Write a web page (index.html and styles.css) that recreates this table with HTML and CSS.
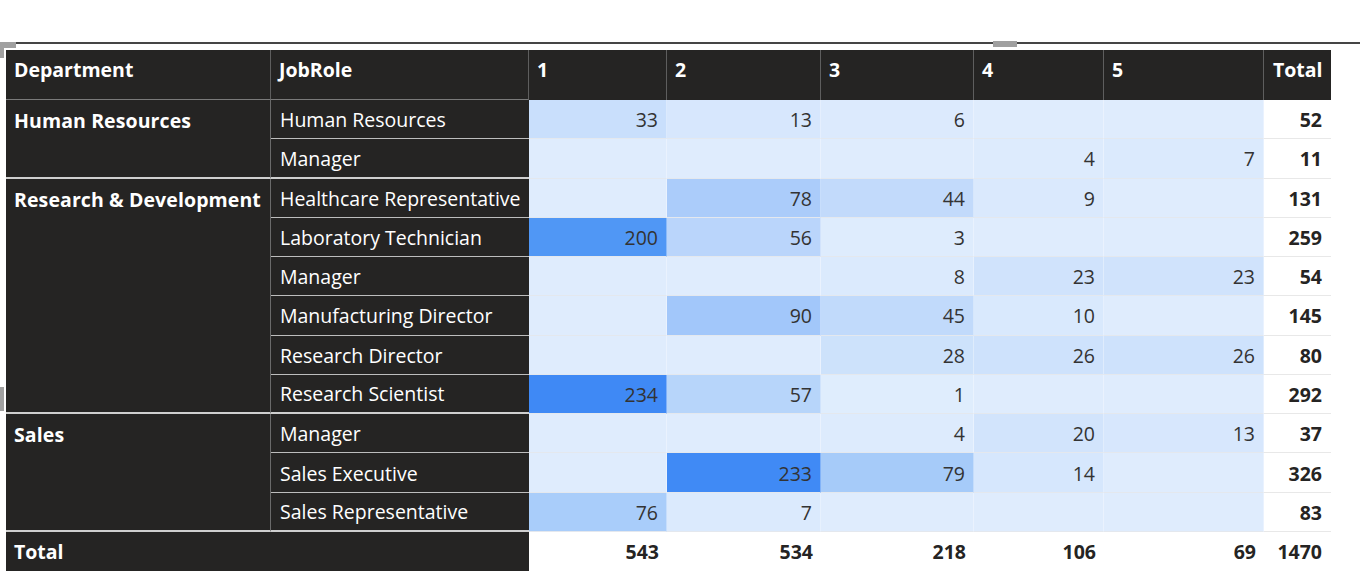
FILE: index.html
```html
<!DOCTYPE html>
<html lang="en">
<head>
<meta charset="utf-8">
<title>Matrix</title>
<link rel="stylesheet" href="styles.css">
</head>
<body>
<div class="frame">
  <div class="rule"></div>
  <div class="matrix">
    <div class="hd">Department</div>
    <div class="hd">JobRole</div>
    <div class="hd hv">1</div>
    <div class="hd hv">2</div>
    <div class="hd hv">3</div>
    <div class="hd hv">4</div>
    <div class="hd hv">5</div>
    <div class="hd hv last">Total</div>

    <div class="dept span2">Human Resources</div>
    <div class="role">Human Resources</div>
    <div class="v" style="background:#c9dffc">33</div>
    <div class="v" style="background:#d7e7fd">13</div>
    <div class="v" style="background:#dceafd">6</div>
    <div class="v" style="background:#dfecfd"></div>
    <div class="v" style="background:#dfecfd"></div>
    <div class="t">52</div>

    <div class="role glast">Manager</div>
    <div class="v" style="background:#dfecfd"></div>
    <div class="v" style="background:#dfecfd"></div>
    <div class="v" style="background:#dfecfd"></div>
    <div class="v" style="background:#ddebfd">4</div>
    <div class="v" style="background:#dbeafd">7</div>
    <div class="t">11</div>

    <div class="dept span6">Research &amp; Development</div>
    <div class="role">Healthcare Representative</div>
    <div class="v" style="background:#dfecfd"></div>
    <div class="v" style="background:#abccfa">78</div>
    <div class="v" style="background:#c2dafb">44</div>
    <div class="v" style="background:#dae9fd">9</div>
    <div class="v" style="background:#dfecfd"></div>
    <div class="t">131</div>

    <div class="role">Laboratory Technician</div>
    <div class="v" style="background:#5097f5">200</div>
    <div class="v" style="background:#bad5fb">56</div>
    <div class="v" style="background:#deecfd">3</div>
    <div class="v" style="background:#dfecfd"></div>
    <div class="v" style="background:#dfecfd"></div>
    <div class="t">259</div>

    <div class="role">Manager</div>
    <div class="v" style="background:#dfecfd"></div>
    <div class="v" style="background:#dfecfd"></div>
    <div class="v" style="background:#dbeafd">8</div>
    <div class="v" style="background:#d0e3fc">23</div>
    <div class="v" style="background:#d0e3fc">23</div>
    <div class="t">54</div>

    <div class="role">Manufacturing Director</div>
    <div class="v" style="background:#dfecfd"></div>
    <div class="v" style="background:#a2c7fa">90</div>
    <div class="v" style="background:#c1dafb">45</div>
    <div class="v" style="background:#d9e9fd">10</div>
    <div class="v" style="background:#dfecfd"></div>
    <div class="t">145</div>

    <div class="role">Research Director</div>
    <div class="v" style="background:#dfecfd"></div>
    <div class="v" style="background:#dfecfd"></div>
    <div class="v" style="background:#cde2fb">28</div>
    <div class="v" style="background:#cee2fc">26</div>
    <div class="v" style="background:#cee2fc">26</div>
    <div class="t">80</div>

    <div class="role glast">Research Scientist</div>
    <div class="v" style="background:#3f89f5">234</div>
    <div class="v" style="background:#b7d5fa">57</div>
    <div class="v" style="background:#dfedfd">1</div>
    <div class="v" style="background:#dfecfd"></div>
    <div class="v" style="background:#dfecfd"></div>
    <div class="t">292</div>

    <div class="dept span3">Sales</div>
    <div class="role">Manager</div>
    <div class="v" style="background:#dfecfd"></div>
    <div class="v" style="background:#dfecfd"></div>
    <div class="v" style="background:#ddebfd">4</div>
    <div class="v" style="background:#d2e4fc">20</div>
    <div class="v" style="background:#d7e7fd">13</div>
    <div class="t">37</div>

    <div class="role">Sales Executive</div>
    <div class="v" style="background:#dfecfd"></div>
    <div class="v" style="background:#408af5">233</div>
    <div class="v" style="background:#a6cbf9">79</div>
    <div class="v" style="background:#d6e7fd">14</div>
    <div class="v" style="background:#dfecfd"></div>
    <div class="t">326</div>

    <div class="role glast">Sales Representative</div>
    <div class="v" style="background:#a9cdfa">76</div>
    <div class="v" style="background:#dbeafd">7</div>
    <div class="v" style="background:#dfecfd"></div>
    <div class="v" style="background:#dfecfd"></div>
    <div class="v" style="background:#dfecfd"></div>
    <div class="t">83</div>

    <div class="tot-label">Total</div>
    <div class="tv">543</div>
    <div class="tv">534</div>
    <div class="tv">218</div>
    <div class="tv">106</div>
    <div class="tv">69</div>
    <div class="tv tt">1470</div>
  </div>
  <div class="handle h-corner-top"></div>
  <div class="handle h-corner-left"></div>
  <div class="handle h-top-mid"></div>
  <div class="handle h-left-mid"></div>
</div>
</body>
</html>
```

FILE: styles.css
```css
html, body {
  margin: 0;
  padding: 0;
  background: #ffffff;
}

body {
  font-family: "Open Sans", "Noto Sans", "DejaVu Sans", sans-serif;
  font-size: 19.5px;
  color: #252423;
  width: 1360px;
  height: 588px;
  overflow: hidden;
}

.frame {
  position: relative;
  padding-top: 42px;
}

.rule {
  height: 2px;
  background: #454545;
}

.matrix {
  margin: 6px 0 0 6px;
  display: grid;
  grid-template-columns: 265px 258px 138px 154px 153px 130px 160px 67px;
  grid-template-rows: 50px repeat(11, 39.28px) 39px;
  width: 1325px;
  line-height: 26px;
}

.matrix > div {
  box-sizing: border-box;
  display: flex;
  align-items: center;
  white-space: nowrap;
}

.hd {
  background: #252423;
  color: #ffffff;
  font-weight: 700;
  padding: 7px 8px 0 8px;
  align-items: flex-start !important;
  border-right: 1px solid #5e5e5e;
  border-bottom: 1px solid #7a7a7a;
}

.hd.hv {
  border-bottom: none;
}

.hd.last {
  border-right: none;
  padding-left: 9px;
}

.dept {
  background: #252423;
  color: #ffffff;
  font-weight: 700;
  padding: 8px 8px 0 8px;
  align-items: flex-start !important;
  border-right: 1px solid #6a6a6a;
  border-bottom: 2px solid #cfcfcf;
  letter-spacing: 0.1px;
}

.span2 { grid-row: span 2; }
.span6 { grid-row: span 6; }
.span3 { grid-row: span 3; }

.role {
  background: #252423;
  color: #ffffff;
  padding: 2px 8px 0 9px;
  border-bottom: 1px solid #bdbdbd;
}

.role.glast {
  border-bottom: 2px solid #cfcfcf;
}

.v {
  justify-content: flex-end;
  padding: 2px 8px 0 0;
  color: #333333;
  border-bottom: 1px solid #e4e8ee;
  border-right: 1px solid rgba(255, 255, 255, 0.35);
}

.t {
  justify-content: flex-end;
  padding: 2px 9px 0 0;
  background: #ffffff;
  font-weight: 700;
  border-bottom: 1px solid #e8e8e8;
}

.tot-label {
  grid-column: span 2;
  background: #252423;
  color: #ffffff;
  font-weight: 700;
  padding: 2px 8px 0 8px;
}

.tv {
  justify-content: flex-end;
  padding: 2px 8px 0 0;
  font-weight: 700;
  background: #ffffff;
}

.tv.tt {
  padding-right: 9px;
}

.handle {
  position: absolute;
  background: #a0a0a0;
}

.h-corner-top {
  left: 0;
  top: 42px;
  width: 16px;
  height: 6px;
}

.h-corner-left {
  left: 0;
  top: 42px;
  width: 4px;
  height: 16px;
}

.h-top-mid {
  left: 993px;
  top: 41px;
  width: 24px;
  height: 6px;
}

.h-left-mid {
  left: 0;
  top: 387px;
  width: 4px;
  height: 24px;
}
```
